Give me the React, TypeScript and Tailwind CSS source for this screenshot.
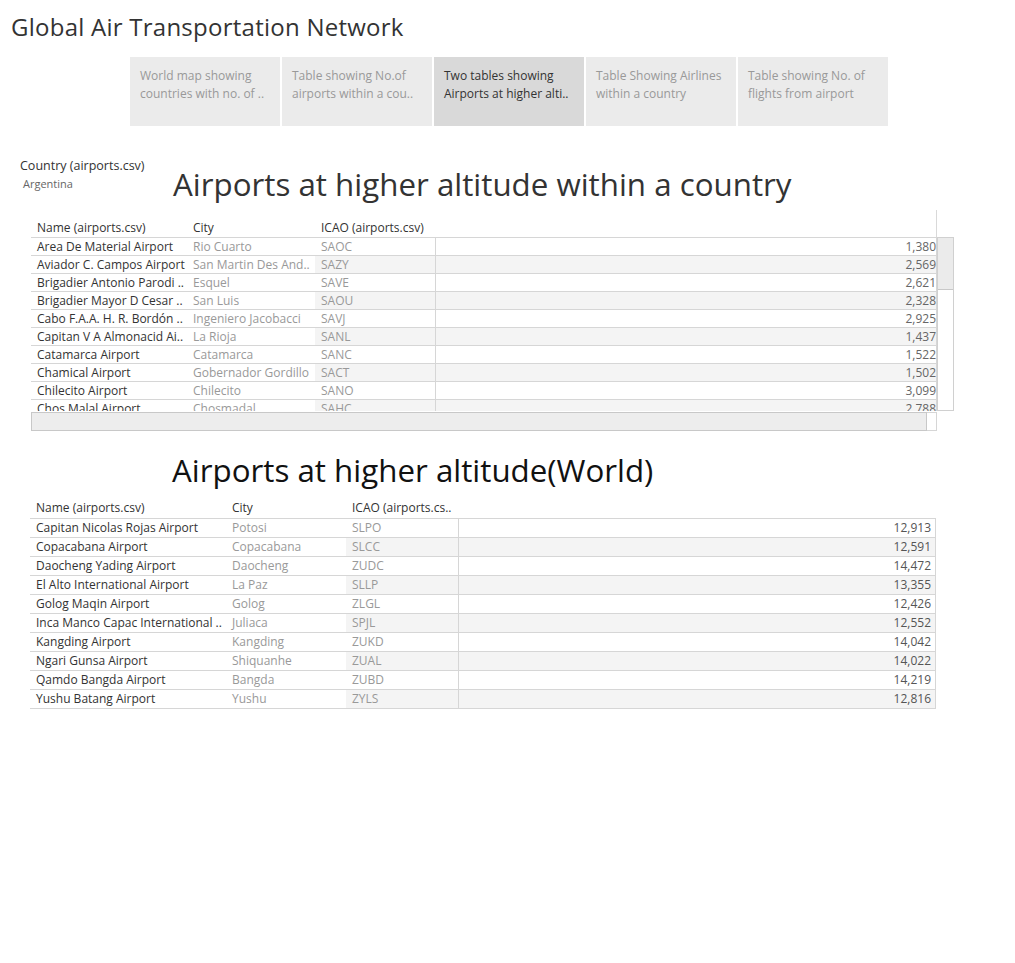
import React from 'react';

type Row = { name: string; city: string; icao: string; alt: string };

const tabs = [
  { l1: 'World map showing', l2: 'countries with no. of ..', active: false },
  { l1: 'Table showing No.of', l2: 'airports within a cou..', active: false },
  { l1: 'Two tables showing', l2: 'Airports at higher alti..', active: true },
  { l1: 'Table Showing Airlines', l2: 'within a country', active: false },
  { l1: 'Table showing No. of', l2: 'flights from airport', active: false },
];

const countryRows: Row[] = [
  { name: 'Area De Material Airport', city: 'Rio Cuarto', icao: 'SAOC', alt: '1,380' },
  { name: 'Aviador C. Campos Airport', city: 'San Martin Des And..', icao: 'SAZY', alt: '2,569' },
  { name: 'Brigadier Antonio Parodi ..', city: 'Esquel', icao: 'SAVE', alt: '2,621' },
  { name: 'Brigadier Mayor D Cesar ..', city: 'San Luis', icao: 'SAOU', alt: '2,328' },
  { name: 'Cabo F.A.A. H. R. Bordón ..', city: 'Ingeniero Jacobacci', icao: 'SAVJ', alt: '2,925' },
  { name: 'Capitan V A Almonacid Ai..', city: 'La Rioja', icao: 'SANL', alt: '1,437' },
  { name: 'Catamarca Airport', city: 'Catamarca', icao: 'SANC', alt: '1,522' },
  { name: 'Chamical Airport', city: 'Gobernador Gordillo', icao: 'SACT', alt: '1,502' },
  { name: 'Chilecito Airport', city: 'Chilecito', icao: 'SANO', alt: '3,099' },
  { name: 'Chos Malal Airport', city: 'Chosmadal', icao: 'SAHC', alt: '2,788' },
];

const worldRows: Row[] = [
  { name: 'Capitan Nicolas Rojas Airport', city: 'Potosi', icao: 'SLPO', alt: '12,913' },
  { name: 'Copacabana Airport', city: 'Copacabana', icao: 'SLCC', alt: '12,591' },
  { name: 'Daocheng Yading Airport', city: 'Daocheng', icao: 'ZUDC', alt: '14,472' },
  { name: 'El Alto International Airport', city: 'La Paz', icao: 'SLLP', alt: '13,355' },
  { name: 'Golog Maqin Airport', city: 'Golog', icao: 'ZLGL', alt: '12,426' },
  { name: 'Inca Manco Capac International ..', city: 'Juliaca', icao: 'SPJL', alt: '12,552' },
  { name: 'Kangding Airport', city: 'Kangding', icao: 'ZUKD', alt: '14,042' },
  { name: 'Ngari Gunsa Airport', city: 'Shiquanhe', icao: 'ZUAL', alt: '14,022' },
  { name: 'Qamdo Bangda Airport', city: 'Bangda', icao: 'ZUBD', alt: '14,219' },
  { name: 'Yushu Batang Airport', city: 'Yushu', icao: 'ZYLS', alt: '12,816' },
];

const App = () => {
  return (
    <div
      className="w-[1015px] h-[963px] bg-white overflow-hidden text-[#333]"
      style={{ fontFamily: '"Open Sans", "Noto Sans", sans-serif' }}
    >
      {/* Dashboard title */}
      <h1 className="pl-[11px] pt-[11px] text-[24px] leading-[32px] tracking-[0.25px] text-[#333]">
        Global Air Transportation Network
      </h1>

      {/* Story tabs */}
      <div className="flex gap-[2px] ml-[130px] mt-[14px]">
        {tabs.map((t) => (
          <div
            key={t.l1}
            className={`w-[150px] h-[69px] pl-[10px] pt-[10px] text-[12px] leading-[18px] whitespace-nowrap ${
              t.active ? 'bg-[#d9d9d9] text-[#333]' : 'bg-[#ebebeb] text-[#999]'
            }`}
          >
            <div>{t.l1}</div>
            <div>{t.l2}</div>
          </div>
        ))}
      </div>

      {/* Filter + first heading */}
      <div className="flex items-start mt-[24px]">
        <div className="w-[173px] shrink-0 pl-[20px] mt-[8px]">
          <div className="text-[12.5px] leading-[16px] text-[#333]">Country (airports.csv)</div>
          <div className="text-[11px] leading-[16px] text-[#666] ml-[3px] mt-[2px]">Argentina</div>
        </div>
        <h2 className="mt-[16px] text-[31.3px] leading-[36px] text-[#333]">
          Airports at higher altitude within a country
        </h2>
      </div>

      {/* Table 1 */}
      <div className="ml-[31px] mt-[8px] w-[923px]">
        <div className="flex items-end h-[27px] w-[906px] border-r border-[#d9d9d9] text-[12px] leading-[18px] text-[#333]">
          <div className="w-[156px] pl-[6px] whitespace-nowrap">Name (airports.csv)</div>
          <div className="w-[128px] pl-[6px]">City</div>
          <div className="w-[120px] pl-[6px] whitespace-nowrap">ICAO (airports.csv)</div>
        </div>
        <div className="flex">
          <div className="w-[906px] h-[174px] overflow-hidden">
            {countryRows.map((r, i) => (
              <div key={r.icao} className="flex h-[18px] border-t border-[#d6d6d6] text-[12px] leading-[17px]">
                <div className="w-[156px] shrink-0 pl-[6px] text-[#333] whitespace-nowrap overflow-hidden">{r.name}</div>
                <div className="w-[128px] shrink-0 pl-[6px] text-[#999] whitespace-nowrap overflow-hidden">{r.city}</div>
                <div className={`w-[120px] shrink-0 pl-[6px] text-[#999] ${i % 2 ? 'bg-[#f4f4f4]' : ''}`}>{r.icao}</div>
                <div
                  className={`flex-1 text-right text-[#666] border-l border-r border-[#d6d6d6] ${
                    i % 2 ? 'bg-[#f4f4f4]' : ''
                  }`}
                >
                  {r.alt}
                </div>
              </div>
            ))}
          </div>
          {/* vertical scrollbar */}
          <div className="w-[17px] h-[174px] border border-[#d0d0d0] bg-white">
            <div className="h-[52px] bg-[#ebebeb] border-b border-[#c8c8c8]" />
          </div>
        </div>
        {/* horizontal scrollbar */}
        <div className="flex w-[906px] h-[19px] mt-[1px]">
          <div className="w-[896px] h-full bg-[#ededed] border border-[#c8c8c8]" />
          <div className="flex-1 h-full border-t border-r border-b border-[#d6d6d6]" />
        </div>
      </div>

      {/* Table 2 */}
      <h2 className="ml-[172px] mt-[21px] text-[31.3px] leading-[36px] text-[#111]">
        Airports at higher altitude(World)
      </h2>
      <div className="ml-[30px] w-[906px]">
        <div className="flex items-end h-[30px] pb-[1px] text-[12px] leading-[18px] text-[#333]">
          <div className="w-[196px] pl-[6px]">Name (airports.csv)</div>
          <div className="w-[120px] pl-[6px]">City</div>
          <div className="w-[112px] pl-[6px] whitespace-nowrap">ICAO (airports.cs..</div>
        </div>
        <div className="border-b border-[#d6d6d6]">
          {worldRows.map((r, i) => (
            <div key={r.icao} className="flex h-[19px] border-t border-[#d6d6d6] text-[12px] leading-[18px]">
              <div className="w-[196px] shrink-0 pl-[6px] text-[#333] whitespace-nowrap overflow-hidden">{r.name}</div>
              <div className="w-[120px] shrink-0 pl-[6px] text-[#999]">{r.city}</div>
              <div className={`w-[112px] shrink-0 pl-[6px] text-[#999] ${i % 2 ? 'bg-[#f4f4f4]' : ''}`}>{r.icao}</div>
              <div
                className={`flex-1 text-right pr-[4px] text-[#555] border-l border-r border-[#d6d6d6] ${
                  i % 2 ? 'bg-[#f4f4f4]' : ''
                }`}
              >
                {r.alt}
              </div>
            </div>
          ))}
        </div>
      </div>
    </div>
  );
};

export default App;
